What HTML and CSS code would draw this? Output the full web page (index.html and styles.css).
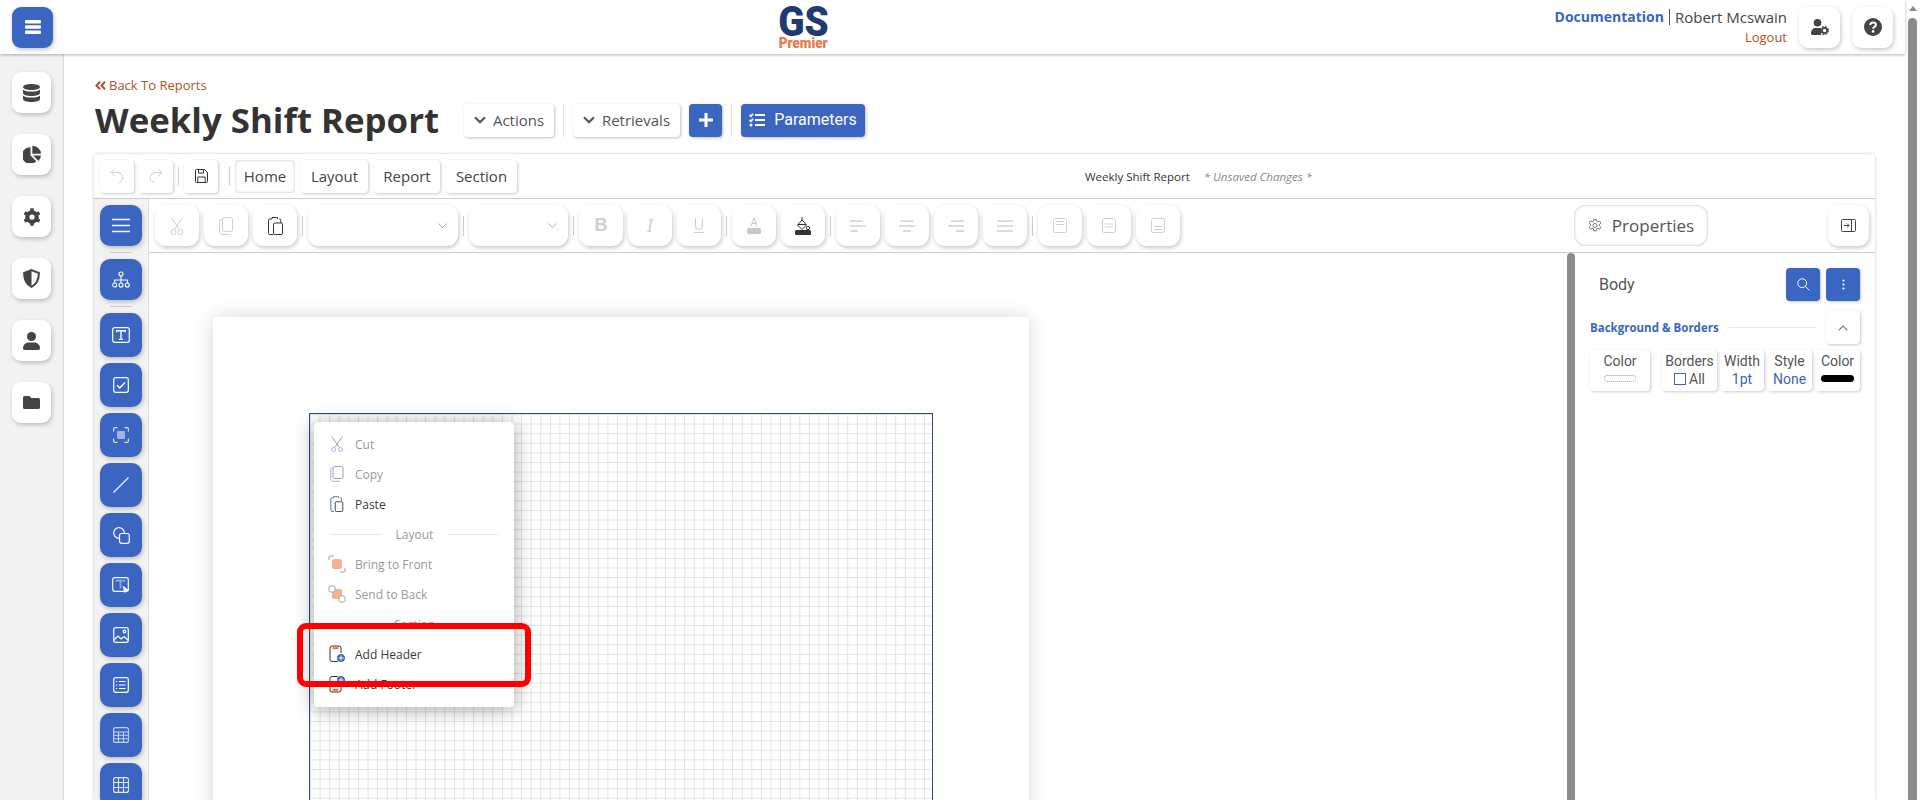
FILE: index.html
```html
<!DOCTYPE html>
<html lang="en">
<head>
<meta charset="utf-8">
<title>Weekly Shift Report</title>
<link rel="stylesheet" href="styles.css">
</head>
<body>
<div class="app">
  <div class="viewport">
    <header class="topbar">
      <button class="tb-btn blue"><svg width="16" height="14" viewBox="0 0 16 14"><path fill="#fff" d="M1 0h14a1 1 0 0 1 1 1v1.5a1 1 0 0 1-1 1H1a1 1 0 0 1-1-1V1a1 1 0 0 1 1-1zm0 5.2h14a1 1 0 0 1 1 1v1.6a1 1 0 0 1-1 1H1a1 1 0 0 1-1-1V6.200a1 1 0 0 1 1-1zm0 5.300h14a1 1 0 0 1 1 1V13a1 1 0 0 1-1 1H1a1 1 0 0 1-1-1v-1.500a1 1 0 0 1 1-1z"/></svg></button>
      <div class="logo"><span class="logo-gs">GS</span><span class="logo-pr">Premier</span></div>
      <div class="user">
        <div class="user-l1"><a class="doc">Documentation</a><span class="pipe"></span><span>Robert Mcswain</span></div>
        <a class="logout">Logout</a>
      </div>
      <button class="tb-btn"><svg width="18" height="16" viewBox="0 0 18 16"><circle cx="6.500" cy="3.800" r="3.800" fill="#444"/><path fill="#444" d="M0 14.500C0 11 2 9 4.500 9h4c1 0 1.500.3 1.500.3v6.700H1.500C.6 16 0 15.400 0 14.500z"/><circle cx="13.500" cy="11.500" r="2.600" fill="none" stroke="#444" stroke-width="1.800"/><circle cx="13.500" cy="11.500" r="3.900" fill="none" stroke="#444" stroke-width="1.200" stroke-dasharray="1.800 1.260"/></svg></button>
      <button class="tb-btn"><svg width="18" height="18" viewBox="0 0 18 18"><circle cx="9" cy="9" r="9" fill="#444"/><path d="M6.200 7c0-1.600 1.300-2.500 2.900-2.500 1.500 0 2.800.9 2.800 2.400 0 2-2.800 2-2.800 3.800" fill="none" stroke="#fff" stroke-width="2"/><circle cx="9.100" cy="13.400" r="1.300" fill="#fff"/></svg></button>
    </header>
    <div class="shell">
      <nav class="sidebar">
        <button class="side-btn"><svg width="17" height="18" viewBox="0 0 17 18"><path fill="#444" d="M8.500 0C13 0 17 1.300 17 3s-4 3-8.500 3S0 4.700 0 3s4-3 8.500-3zM0 5.400C1.500 7 5 7.500 8.500 7.500s7-.5 8.500-2.100V9c0 1.700-4 3-8.500 3S0 10.700 0 9zm0 6C1.500 13 5 13.500 8.500 13.500s7-.5 8.500-2.100V15c0 1.700-4 3-8.500 3S0 16.700 0 15z"/></svg></button>
        <button class="side-btn"><svg width="18" height="17" viewBox="0 0 18 17"><path fill="#444" d="M7.500 1.200v8.200l5.800 5.800A8.300 8.300 0 1 1 7.500 1.200z"/><path fill="#444" d="M9.300 0A8.300 8.300 0 0 1 18 7.700H9.300z"/><path fill="#444" d="M10 9.500h8a8.300 8.300 0 0 1-2.500 5.500z"/></svg></button>
        <button class="side-btn"><svg width="18" height="18" viewBox="0 0 18 18"><circle cx="9" cy="9" r="4.700" fill="none" stroke="#444" stroke-width="4.200"/><g stroke="#444" stroke-width="3.400"><path d="M9 .3v3M9 14.700v3M1.500 4.700l2.600 1.500M13.900 11.800l2.600 1.500M1.500 13.300l2.600-1.500M13.900 6.200l2.600-1.500"/></g></svg></button>
        <button class="side-btn"><svg width="17" height="19" viewBox="0 0 17 19"><path fill="none" stroke="#444" stroke-width="2" d="M8.500 1.100 15.900 4c0 6-1.800 11-7.400 13.900C2.900 15 1.100 10 1.100 4z"/><path fill="#444" d="M8.500 1.500V18C3 15 1.500 10 1.500 4.300z"/></svg></button>
        <button class="side-btn"><svg width="17" height="18" viewBox="0 0 17 18"><circle cx="8.500" cy="4.500" r="4.500" fill="#444"/><path fill="#444" d="M0 16.300C0 13 2.500 10.500 5.500 10.500h6c3 0 5.500 2.500 5.500 5.800 0 1-.7 1.700-1.700 1.700H1.700C.7 18 0 17.300 0 16.300z"/></svg></button>
        <button class="side-btn"><svg width="17" height="13" viewBox="0 0 17 13"><path fill="#444" d="M1.600 0h4.800l2 2h7A1.600 1.600 0 0 1 17 3.600v7.800a1.600 1.600 0 0 1-1.600 1.600H1.600A1.600 1.600 0 0 1 0 11.400V1.600A1.600 1.600 0 0 1 1.600 0z"/></svg></button>
      </nav>
      <main class="main">
        <a class="back"><svg width="11" height="9" viewBox="0 0 11 9"><path fill="none" stroke="#b5502a" stroke-width="2" d="M5 .7 1.500 4.500 5 8.300M10 .7 6.500 4.500 10 8.300"/></svg>Back To Reports</a>
        <div class="title-row">
          <h1 class="title">Weekly Shift Report</h1>
          <button class="act act-actions"><svg class="chev" width="12" height="8" viewBox="0 0 12 8"><path fill="none" stroke="#555" stroke-width="2.200" d="M1 1.200 6 6.200l5-5"/></svg>Actions</button>
          <span class="vsep"></span>
          <button class="act act-retr"><svg class="chev" width="12" height="8" viewBox="0 0 12 8"><path fill="none" stroke="#555" stroke-width="2.200" d="M1 1.200 6 6.200l5-5"/></svg>Retrievals</button>
          <button class="act act-plus"><svg width="14" height="14" viewBox="0 0 14 14"><path stroke="#fff" stroke-width="3" d="M7 0v14M0 7h14"/></svg></button>
          <span class="vsep"></span>
          <button class="act act-param"><svg width="16" height="14" viewBox="0 0 16 14"><path fill="none" stroke="#fff" stroke-width="1.700" d="M.5 2 2 3.300 4 .8M.5 7 2 8.300 4 5.800"/><circle cx="2" cy="12" r="1.500" fill="#fff"/><path stroke="#fff" stroke-width="2" d="M6 2h10M6 7h10M6 12h10"/></svg>Parameters</button>
        </div>
        <section class="card">
          <div class="row1">
            <button class="r1 r1-ico dim"><svg width="14" height="16" viewBox="0 0 14 16"><path fill="none" stroke="currentColor" d="M4.500 1 1 4.500 4.500 8M1 4.500h7a5 5 0 0 1 2 9.500l-1.500 1"/></svg></button>
            <button class="r1 r1-ico dim"><svg width="14" height="16" viewBox="0 0 14 16"><path fill="none" stroke="currentColor" d="M9.500 1 13 4.500 9.500 8M13 4.500H6a5 5 0 0 0-2 9.500l1.500 1"/></svg></button>
            <span class="r1sep"></span>
            <button class="r1 r1-ico"><svg width="13" height="14" viewBox="0 0 13 14"><path fill="none" stroke="#333" d="M1.500.5h8l3 3v9a1 1 0 0 1-1 1h-10a1 1 0 0 1-1-1v-11a1 1 0 0 1 1-1zM3.500.5v3.500h5V.5M2.800 13.500V8h7.400v5.500"/></svg></button>
            <span class="r1sep sep2"></span>
            <button class="r1 r1-home">Home</button>
            <button class="r1 r1-layout">Layout</button>
            <button class="r1 r1-report">Report</button>
            <button class="r1 r1-section">Section</button>
            <span class="docname">Weekly Shift Report</span>
            <span class="unsaved">* Unsaved Changes *</span>
          </div>
          <div class="card-body">
            <div class="tools">
              <button class="tool first"><svg width="18" height="15" viewBox="0 0 18 15"><path stroke="#fff" stroke-width="1.700" d="M0 1.500h18M0 7.500h18M0 13.500h18"/></svg></button>
              <span class="tool-sep"></span>
              <button class="tool first"><svg width="18" height="17" viewBox="0 0 18 17" fill="none" stroke="#fff" stroke-width="1.100"><circle cx="9" cy="3" r="2"/><circle cx="2.700" cy="14" r="2"/><circle cx="9" cy="14" r="2"/><circle cx="15.300" cy="14" r="2"/><path d="M9 5v7M2.700 12V9h12.600v3"/></svg></button>
              <span class="tool-sep"></span>
              <button class="tool"><svg width="18" height="16" viewBox="0 0 18 16" fill="none" stroke="#fff"><rect x=".7" y=".7" width="16.600" height="14.600" rx="2" stroke-width="1.200"/><path stroke-width="1.400" d="M4.700 5.200V3.800h8.600v1.400M9 3.800v8.500M7 12.400h4"/></svg></button>
              <button class="tool"><svg width="16" height="16" viewBox="0 0 16 16" fill="none" stroke="#fff"><rect x=".7" y=".7" width="14.600" height="14.600" rx="2" stroke-width="1.200"/><path stroke-width="1.500" d="M4 8.300 6.800 11 12 5.500"/></svg></button>
              <button class="tool"><svg width="16" height="16" viewBox="0 0 16 16" fill="none" stroke="#dbe4f6" stroke-width="1.200"><path d="M.6 4.500V2A1.400 1.400 0 0 1 2 .6h2.500M11.500.6H14A1.400 1.400 0 0 1 15.400 2v2.500M15.400 11.500V14a1.400 1.400 0 0 1-1.400 1.400h-2.500M4.500 15.400H2A1.400 1.400 0 0 1 .6 14v-2.500"/><rect x="4" y="4" width="8" height="8" rx="1" fill="#9db4e4" stroke="none"/></svg></button>
              <button class="tool"><svg width="16" height="16" viewBox="0 0 16 16"><path stroke="#fff" stroke-width="1.100" d="M.5 15.500 15.500.5"/></svg></button>
              <button class="tool"><svg width="17" height="17" viewBox="0 0 17 17" fill="none" stroke="#fff" stroke-width="1.200"><circle cx="6" cy="6" r="5.300"/><rect x="6.500" y="6.500" width="9.800" height="9.800" rx="2" fill="#3a65c0"/></svg></button>
              <button class="tool"><svg width="18" height="17" viewBox="0 0 18 17" fill="none" stroke="#fff"><rect x=".7" y=".7" width="15.600" height="13.600" rx="2" stroke-width="1.200"/><path stroke="#8fa8dd" stroke-width="1.800" d="M4.500 4.800V3.600h8v1.200M8.500 3.600v8"/><path fill="#fff" stroke="none" d="M10.500 8.500l6.800 5-3 .3-1.600 2.800z"/></svg></button>
              <button class="tool"><svg width="16" height="16" viewBox="0 0 16 16" fill="none" stroke="#fff" stroke-width="1.200"><rect x=".7" y=".7" width="14.600" height="14.600" rx="2"/><path d="M1 13l4-4 3 3 3-2.500 4 3.500"/><circle cx="11.500" cy="4.500" r="1.300"/></svg></button>
              <button class="tool"><svg width="16" height="16" viewBox="0 0 16 16" fill="none" stroke="#fff" stroke-width="1.200"><rect x=".7" y=".7" width="14.600" height="14.600" rx="2"/><path d="M6 4.500h6.500M6 8h6.500M6 11.500h6.500M3 4.500h1.200M3 8h1.200M3 11.500h1.200"/></svg></button>
              <button class="tool"><svg width="16" height="16" viewBox="0 0 16 16" fill="none" stroke="#c6d3ef" stroke-width="1.100"><rect x=".6" y=".6" width="14.800" height="14.800" rx="2"/><path d="M.6 5h14.800M.6 8.300h14.800M.6 11.800h14.800M5.500 5v10.400M10.500 5v10.400"/></svg></button>
              <button class="tool"><svg width="16" height="16" viewBox="0 0 16 16" fill="none" stroke="#e6ecf9" stroke-width="1.100"><rect x=".6" y=".6" width="14.800" height="14.800" rx="2"/><path d="M.6 5.500h14.800M.6 10.500h14.800M5.500.6v14.800M10.500.6v14.800"/></svg></button>
            </div>
            <div class="work">
              <div class="fmt">
                <button class="fb dim"><svg width="14" height="18" viewBox="0 0 14 18" fill="none" stroke="currentColor"><path d="M1.500.5 9.500 12.500M12.500.5 4.500 12.500"/><circle cx="3.500" cy="15" r="2.500"/><circle cx="10.500" cy="15" r="2.500"/></svg></button>
                <button class="fb dim"><svg width="14" height="18" viewBox="0 0 14 18" fill="none" stroke="currentColor"><rect x="3.500" y=".5" width="10" height="14" rx="2"/><path d="M3.500 2.500H2A1.500 1.500 0 0 0 .5 4v11A2.500 2.500 0 0 0 3 17.500h8"/></svg></button>
                <button class="fb"><svg width="15" height="19" viewBox="0 0 15 19" fill="none" stroke="#333"><path d="M4 3H1.800A1.300 1.300 0 0 0 .5 4.300v13A1.200 1.200 0 0 0 1.800 18.500H5M4 3V1.500h5.500V3M11 3h.5A1.300 1.300 0 0 1 12.800 4.300V7"/><rect x="5.500" y="7" width="9" height="11.500" rx="1.300"/></svg></button>
                <span class="fsep"></span>
                <div class="sel sel1"><svg width="9" height="5" viewBox="0 0 9 5"><path fill="none" stroke="#aaa" d="M.5.500l4 4 4-4"/></svg></div>
                <span class="fsep"></span>
                <div class="sel sel2"><svg width="9" height="5" viewBox="0 0 9 5"><path fill="none" stroke="#aaa" d="M.5.500l4 4 4-4"/></svg></div>
                <span class="fsep"></span>
                <button class="fb dim fl">B</button>
                <button class="fb dim fi">I</button>
                <button class="fb dim fu"><svg width="10" height="15" viewBox="0 0 10 15" fill="none" stroke="currentColor"><path d="M1.500 0v8a3.500 3.500 0 0 0 7 0V0M0 14.500h10"/></svg></button>
                <span class="fsep"></span>
                <button class="fb dim"><svg width="14" height="17" viewBox="0 0 14 17"><path fill="none" stroke="#c8c8c8" d="M4 9 7 1l3 8M5 6.500h4"/><rect y="11" width="14" height="6" rx="1.500" fill="#c8c8c8"/></svg></button>
                <button class="fb"><svg width="16" height="18" viewBox="0 0 16 18"><path fill="none" stroke="#333" d="M7 0v4M7 3 2.500 8 7 12.500l4.500-4.500zM3 7.500h8"/><circle cx="13" cy="11" r="1.700" fill="none" stroke="#333"/><rect y="13" width="16" height="5" rx="1.500" fill="#333"/></svg></button>
                <span class="fsep"></span>
                <button class="fb dim"><svg width="16" height="12" viewBox="0 0 16 12"><path stroke="currentColor" stroke-width="1.500" d="M0 1h13M0 6h16M0 11h8"/></svg></button>
                <button class="fb dim"><svg width="16" height="12" viewBox="0 0 16 12"><path stroke="currentColor" stroke-width="1.500" d="M1.500 1h13M0 6h16M4 11h8"/></svg></button>
                <button class="fb dim"><svg width="16" height="12" viewBox="0 0 16 12"><path stroke="currentColor" stroke-width="1.500" d="M3 1h13M0 6h16M8 11h8"/></svg></button>
                <button class="fb dim"><svg width="16" height="12" viewBox="0 0 16 12"><path stroke="currentColor" stroke-width="1.500" d="M0 1h16M0 6h16M0 11h16"/></svg></button>
                <span class="fsep"></span>
                <button class="fb dim"><svg width="14" height="15" viewBox="0 0 14 15" fill="none" stroke="currentColor"><rect x=".5" y=".5" width="13" height="14" rx="2"/><path d="M3 3.500h8M3 6.500h8"/></svg></button>
                <button class="fb dim"><svg width="14" height="15" viewBox="0 0 14 15" fill="none" stroke="currentColor"><rect x=".5" y=".5" width="13" height="14" rx="2"/><path d="M3 6h8M3 9h8"/></svg></button>
                <button class="fb dim"><svg width="14" height="15" viewBox="0 0 14 15" fill="none" stroke="currentColor"><rect x=".5" y=".5" width="13" height="14" rx="2"/><path d="M3 8.500h8M3 11.500h8"/></svg></button>
                <button class="prop-tab"><svg width="14" height="15" viewBox="0 0 18 18" fill="none" stroke="#555"><circle cx="9" cy="9" r="2.600"/><path d="M7.500 1h3l.5 2.500 1.600.8 2.400-1 1.500 2.500-1.900 1.700v1.900l1.900 1.700-1.500 2.500-2.400-1-1.600.8-.5 2.500h-3l-.5-2.500-1.600-.8-2.400 1-1.500-2.500 1.900-1.700V7.300L1.500 5.600 3 3.100l2.400 1 1.600-.8z"/></svg>Properties</button>
                <button class="collapse"><svg width="15" height="13" viewBox="0 0 15 13" fill="none" stroke="#444"><rect x=".5" y=".5" width="14" height="12" rx="1"/><path d="M10.500.5v12M3 6.500h5M6 4.500l2 2-2 2"/></svg></button>
              </div>
              <div class="split">
                <div class="canvas">
                  <div class="page">
                    <div class="grid">
                      <div class="menu">
                        <div class="mi off"><svg class="mic mic-s" viewBox="0 0 14 16" fill="none" stroke="#555"><path d="M1.500.5 9 11M12.500.5 5 11"/><g stroke="#5a80cf"><circle cx="3.500" cy="13.500" r="2"/><circle cx="10.500" cy="13.500" r="2"/></g></svg>Cut</div>
                        <div class="mi off"><svg class="mic mic-s" viewBox="0 0 14 16" fill="none" stroke="#555"><rect x="3" y=".5" width="10" height="12" rx="1.500"/><path stroke="#5a80cf" d="M3 2H2A1.300 1.300 0 0 0 .7 3.300V13A2.300 2.300 0 0 0 3 15.300h7"/></svg>Copy</div>
                        <div class="mi"><svg class="mic mic-s" viewBox="0 0 15 18" fill="none" stroke="#333"><path stroke="#3a65c0" d="M3.500 2H1.800A1.200 1.200 0 0 0 .6 3.200v13a1.200 1.200 0 0 0 1.200 1.200H4M3.500 2V.8h6V2M11 2h.5a1.200 1.200 0 0 1 1.200 1.200V6"/><rect x="5.500" y="6.500" width="8.500" height="11" rx="1.300"/></svg>Paste</div>
                        <div class="mi-head"><span>Layout</span></div>
                        <div class="mi off"><svg class="mic" viewBox="0 0 18 18" fill="none" stroke="#555"><path d="M1 5V2a1 1 0 0 1 1-1h4M17 13v3a1 1 0 0 1-1 1h-4"/><rect x="4" y="4" width="10" height="10" rx="2.500" fill="#e8703f" stroke="none"/></svg>Bring to Front</div>
                        <div class="mi off"><svg class="mic" viewBox="0 0 18 18" fill="none" stroke="#555"><rect x="4" y="4" width="10" height="10" rx="2.500" fill="#e8703f" stroke="none"/><rect x="1" y="1" width="6" height="6" rx="1.500" fill="#fff"/><rect x="11" y="11" width="6" height="6" rx="1.500" fill="#fff"/></svg>Send to Back</div>
                        <div class="mi-head"><span>Section</span></div>
                        <div class="mi"><svg class="mic" viewBox="0 0 18 18" fill="none" stroke="#333"><rect x="2" y="1" width="11" height="15.500" rx="2"/><path stroke="#e8703f" stroke-width="2" d="M4.500 3.200h6"/><circle cx="13" cy="13" r="4.500" fill="#3a65c0" stroke="#fff"/><path stroke="#fff" d="M10.500 13h5M13 10.500v5"/></svg>Add Header</div>
                        <div class="mi"><svg class="mic" viewBox="0 0 18 18" fill="none" stroke="#333"><rect x="2" y="1.500" width="11" height="15.500" rx="2"/><path stroke="#e8703f" stroke-width="2" d="M4.500 14.800h6"/><circle cx="13" cy="5" r="4.500" fill="#3a65c0" stroke="#fff"/><path stroke="#fff" d="M10.500 5h5M13 2.500v5"/></svg>Add Footer</div>
                      </div>
                      <div class="highlight"></div>
                    </div>
                  </div>
                </div>
                <div class="vbar"></div>
                <aside class="props">
                  <div class="props-head">
                    <span class="body-lab">Body</span>
                    <button class="pbtn blue"><svg width="13" height="13" viewBox="0 0 13 13" fill="none" stroke="#fff"><circle cx="5.200" cy="5.200" r="4.400"/><path d="m8.500 8.500 4 4"/></svg></button>
                    <button class="pbtn blue"><svg width="3" height="11" viewBox="0 0 3 11"><circle cx="1.500" cy="1.500" r="1.100" fill="#fff"/><circle cx="1.500" cy="5.500" r="1.100" fill="#fff"/><circle cx="1.500" cy="9.500" r="1.100" fill="#fff"/></svg></button>
                  </div>
                  <div class="props-sec">
                    <span class="sec-title">Background &amp; Borders</span>
                    <span class="sec-line"></span>
                    <button class="pbtn"><svg width="10" height="6" viewBox="0 0 10 6"><path fill="none" stroke="#777" stroke-width="1.200" d="M.7 5.300 5 1l4.300 4.300"/></svg></button>
                  </div>
                  <div class="props-cards">
                    <div class="pc pc-color"><span>Color</span><span class="sw-dot"></span></div>
                    <div class="pc pc-borders"><span>Borders</span><span class="pc-all"><i class="chk"></i>All</span></div>
                    <div class="pc pc-width"><span>Width</span><span class="val">1pt</span></div>
                    <div class="pc pc-style"><span>Style</span><span class="val">None</span></div>
                    <div class="pc pc-color2"><span>Color</span><span class="sw-black"></span></div>
                  </div>
                </aside>
              </div>
            </div>
          </div>
        </section>
      </main>
    </div>
  </div>
  <div class="pagebar"><span class="pb-arrow"></span><span class="pb-thumb"></span></div>
</div>
</body>
</html>
```

FILE: styles.css
```css
* { box-sizing: border-box; }
html, body { margin: 0; padding: 0; height: 800px; overflow: hidden; background: #fff; }
body { font-family: "Open Sans", "Liberation Sans", sans-serif; color: #333; }
button { font: inherit; color: inherit; border: 0; padding: 0; background: #fff; display: inline-flex; align-items: center; justify-content: center; flex: none; }
svg { display: block; flex: none; }

.app { display: flex; height: 800px; overflow: hidden; }
.viewport { width: 1905px; height: 800px; display: flex; flex-direction: column; }
.pagebar { width: 15px; display: flex; flex-direction: column; align-items: center; background: #fff; }
.pb-arrow { width: 0; height: 0; margin-top: 6px; border: 4px solid transparent; border-top: 0; border-bottom: 5px solid #8b8b8b; }
.pb-thumb { width: 9px; flex: 1; margin-top: 7px; background: #8b8b8b; border-radius: 5px 5px 0 0; }

.topbar { height: 54px; flex: none; display: flex; align-items: center; padding: 0 12px; background: #fff; box-shadow: 0 1px 3px rgba(0,0,0,.3); position: relative; z-index: 2; }
.tb-btn { width: 41px; height: 41px; border-radius: 9px; box-shadow: 1px 2px 4px rgba(0,0,0,.22); }
.tb-btn.blue { background: #3a65c0; }
.logo { margin-left: 725px; width: 50px; height: 50px; padding-top: 4px; display: flex; flex-direction: column; align-items: center; font-family: Roboto, sans-serif; font-weight: 900; }
.logo-gs { font-size: 42px; line-height: 31px; color: #1f3b70; transform: scaleX(.92); }
.logo-pr { font-size: 15px; line-height: 13px; color: #e8794a; transform: scaleX(.9); white-space: nowrap; }
.user { margin-left: auto; margin-right: 12px; display: flex; flex-direction: column; align-items: flex-end; font-size: 15px; line-height: 20px; }
.user-l1 { display: flex; align-items: center; color: #444; }
.doc { color: #3a65c0; font-weight: 700; font-size: 14px; }
.pipe { width: 1px; height: 16px; background: #555; margin: 0 5px; }
.logout { color: #b5502a; font-size: 13px; }
.topbar .tb-btn + .tb-btn { margin-left: 12px; }

.shell { flex: 1; display: flex; min-height: 0; }
.sidebar { width: 64px; flex: none; background: #f2f2f2; border-right: 1px solid #ddd; padding: 18px 0 0 12px; display: flex; flex-direction: column; gap: 21px; }
.side-btn { width: 39px; height: 41px; border-radius: 9px; box-shadow: 1px 2px 4px rgba(0,0,0,.22); }

.main { flex: 1; min-width: 0; padding: 23px 30px 0; display: flex; flex-direction: column; }
.back { display: flex; align-items: center; gap: 3px; height: 16px; font-size: 13px; color: #b5502a; margin-left: 1px; }
.title-row { display: flex; align-items: center; height: 34px; margin-top: 10px; margin-left: 1px; }
.title { margin: 0; font-size: 34.8px; line-height: 34px; font-weight: 700; color: #333; white-space: nowrap; width: 369px; }
.act { height: 33px; padding-bottom: 1px; border-radius: 4px; box-shadow: 1px 1px 3px rgba(0,0,0,.25); font-size: 15px; color: #555; gap: 7px; }
.act-actions { width: 90px; }
.act-retr { width: 107px; }
.act-plus { width: 33px; background: #3a65c0; margin-left: 9px; }
.act-param { width: 124px; background: #3a65c0; color: #fff; font-family: Roboto, sans-serif; font-size: 16px; gap: 9px; }
.vsep { width: 1px; height: 33px; background: #e2e2e2; margin: 0 9px; }

.card { flex: 1; min-height: 0; background: #fff; margin-top: 17px; border-radius: 4px 4px 0 0; box-shadow: 0 0 3px rgba(0,0,0,.25); display: flex; flex-direction: column; }
.row1 { height: 45px; flex: none; display: flex; align-items: center; padding: 0 6px; border-bottom: 1px solid #ccc; }
.r1 { height: 33px; border-radius: 4px; box-shadow: 1px 1px 3px rgba(0,0,0,.22); font-size: 15px; color: #444; margin-right: 6px; }
.r1-ico { width: 34px; margin-right: 5px; }
.dim { color: #cfcfcf; }
.r1sep { width: 1px; height: 18px; background: #ccc; margin: 0 5px 0 0; }
.sep2 { margin: 0 5px 0 6px; }
.r1-home { width: 60px; box-shadow: inset 0 0 3px rgba(0,0,0,.25); }
.r1-layout { width: 67px; }
.r1-report { width: 66px; }
.r1-section { width: 71px; }
.docname { margin-left: 562px; font-size: 11.5px; color: #333; white-space: nowrap; }
.unsaved { margin-left: 14px; font-size: 11.5px; font-style: italic; color: #888; white-space: nowrap; }

.card-body { flex: 1; min-height: 0; display: flex; }
.tools { width: 55px; flex: none; background: #f2f2f2; border-right: 1px solid #ddd; padding: 6px 6px 0; display: flex; flex-direction: column; gap: 6px; overflow: hidden; }
.tool { width: 42px; height: 44px; border-radius: 10px; background: #3a65c0; box-shadow: 1px 2px 4px rgba(0,0,0,.22); }
.tool.first { height: 41px; }
.tool-sep { width: 22px; height: 1px; background: #c8c8c8; margin: 0 auto; flex: none; }

.work { flex: 1; min-width: 0; display: flex; flex-direction: column; }
.fmt { height: 54px; flex: none; display: flex; align-items: center; gap: 5px; padding: 0 5px 0 6px; border-bottom: 1px solid #ccc; }
.fb { width: 44px; height: 41px; border-radius: 11px; box-shadow: 1px 2px 4px rgba(0,0,0,.22); }
.fsep { width: 1px; height: 20px; background: #ccc; }
.sel { height: 41px; border-radius: 11px; box-shadow: 1px 2px 4px rgba(0,0,0,.22); display: flex; align-items: center; justify-content: flex-end; padding-right: 11px; flex: none; }
.sel1 { width: 150px; }
.sel2 { width: 99px; }
.fl { font-family: "Liberation Sans", sans-serif; font-size: 18px; font-weight: 700; }
.fi { font-family: "Liberation Serif", serif; font-size: 19px; font-style: italic; }
.prop-tab { width: 134px; height: 41px; margin-left: 389px; border-radius: 11px; box-shadow: inset 0 0 3px rgba(0,0,0,.3); font-size: 17px; color: #555; gap: 10px; }
.collapse { width: 41px; height: 41px; margin-left: 115px; border-radius: 10px; box-shadow: 1px 2px 4px rgba(0,0,0,.22); }

.split { flex: 1; min-height: 0; display: flex; }
.canvas { flex: 1; min-width: 0; overflow: hidden; padding: 64px 0 0 64px; background: #fff; }
.page { width: 816px; height: 1056px; padding: 96px; background: #fff; box-shadow: 0 0 18px rgba(0,0,0,.16); }
.grid { width: 624px; height: 864px; position: relative; border: 1px solid #2c4a8c; background-color: #fff; background-image: linear-gradient(#e2e2e2 1px, transparent 1px), linear-gradient(90deg, #e2e2e2 1px, transparent 1px); background-size: 9.6px 9.6px; }
.menu { position: absolute; left: 4px; top: 8px; width: 200px; height: 285px; background: #fff; border-radius: 4px; box-shadow: 0 2px 20px rgba(0,0,0,.36); padding: 7px 0 0 14px; }
.mi { height: 30px; display: flex; align-items: center; font-size: 12px; color: #3a3a3a; }
.mi.off { color: #9a9a9a; }
.mi.off .mic { opacity: .55; }
.mic { width: 18px; height: 18px; margin-right: 9px; }
.mic-s { height: 16px; }
.mi-head { height: 30px; display: flex; align-items: center; gap: 14px; margin: 0 15px 0 2px; font-size: 12px; color: #9a9a9a; }
.mi-head::before, .mi-head::after { content: ""; flex: 1; height: 1px; background: #ececec; }
.highlight { position: absolute; left: -13px; top: 209px; width: 234px; height: 64px; border: 6px solid #f00; border-radius: 9px; }

.vbar { width: 8px; flex: none; background: #8b8b8b; border-radius: 4px 4px 0 0; }
.props { width: 300px; flex: none; background: #fff; padding: 15px 15px 0; }
.props-head { display: flex; align-items: center; gap: 6px; height: 33px; }
.body-lab { flex: 1; padding-left: 9px; font-family: Roboto, sans-serif; font-size: 16px; color: #555; }
.pbtn { width: 34px; height: 33px; border-radius: 4px; box-shadow: 1px 1px 3px rgba(0,0,0,.22); }
.pbtn.blue { background: #3a65c0; }
.props-sec { display: flex; align-items: center; height: 33px; margin-top: 10px; }
.sec-title { font-size: 11.5px; font-weight: 700; color: #3a65c0; white-space: nowrap; }
.sec-line { flex: 1; height: 1px; background: #e6e8f2; margin: 0 10px; }
.props-cards { display: flex; gap: 3px; margin-top: 6px; font-family: Roboto, sans-serif; font-size: 14px; color: #555; }
.pc { height: 41px; border-radius: 4px; box-shadow: 1px 1px 3px rgba(0,0,0,.2); display: flex; flex-direction: column; align-items: center; padding-top: 2px; line-height: 18px; }
.pc-color { width: 60px; margin-right: 9px; }
.pc-borders { width: 55px; }
.pc-width { width: 44px; }
.pc-style { width: 45px; }
.pc-color2 { width: 45px; }
.val { color: #3a65c0; }
.pc-all { display: flex; align-items: center; gap: 3px; }
.chk { width: 12px; height: 12px; border: 1px solid #3a65c0; display: block; }
.sw-dot { width: 32px; height: 7px; margin-top: 5px; border: 1px dotted #999; border-radius: 4px; }
.sw-black { width: 33px; height: 7px; margin-top: 5px; background: #000; border-radius: 4px; }
```
